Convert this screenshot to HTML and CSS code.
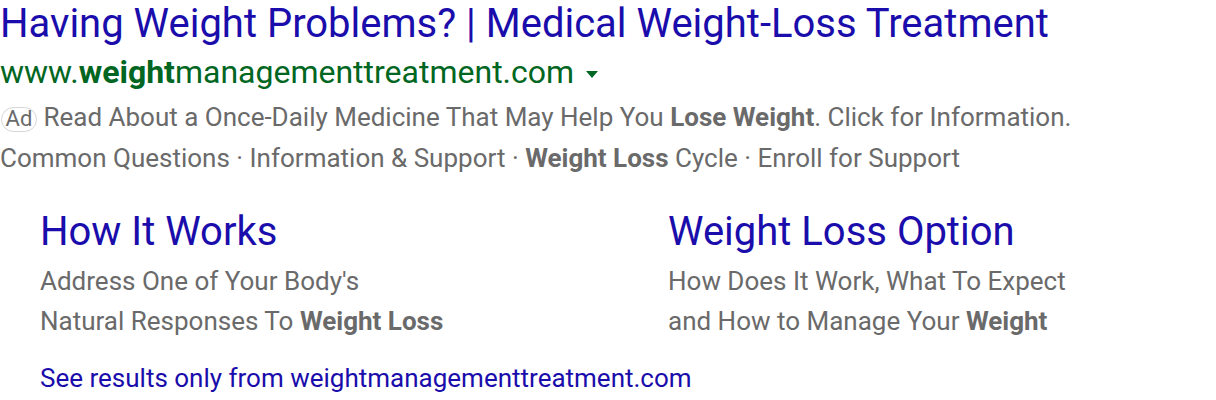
FILE: index.html
```html
<!DOCTYPE html>
<html>
<head>
<meta charset="utf-8">
<link rel="stylesheet" href="styles.css">
</head>
<body>
<div class="ad">
  <h3 class="title">Having Weight Problems? | Medical Weight-Loss Treatment</h3>
  <div class="url">www.<b>weight</b>managementtreatment.com <span class="caret"></span></div>
  <div class="desc"><span class="badge">Ad</span> Read About a Once-Daily Medicine That May Help You <b>Lose Weight</b>. Click for Information.</div>
  <div class="desc">Common Questions · Information &amp; Support · <b>Weight Loss</b> Cycle · Enroll for Support</div>
  <div class="sitelinks">
    <div class="sitelink">
      <div class="sl-title">How It Works</div>
      <div class="sl-desc">Address One of Your Body's</div>
      <div class="sl-desc">Natural Responses To <b>Weight Loss</b></div>
    </div>
    <div class="sitelink">
      <div class="sl-title">Weight Loss Option</div>
      <div class="sl-desc">How Does It Work, What To Expect</div>
      <div class="sl-desc">and How to Manage Your <b>Weight</b></div>
    </div>
  </div>
  <div class="more">See results only from weightmanagementtreatment.com</div>
</div>
</body>
</html>
```

FILE: styles.css
```css
html, body {
  margin: 0;
  padding: 0;
  background: #fff;
}
body {
  font-family: Roboto, "Liberation Sans", sans-serif;
}
.title {
  margin: 0;
  font-weight: 400;
  font-size: 40px;
  line-height: 47px;
  color: #1a0dab;
  white-space: nowrap;
}
.url {
  font-size: 32px;
  line-height: 50px;
  color: #006621;
  white-space: nowrap;
}
.url b {
  font-weight: 700;
}
.caret {
  display: inline-block;
  width: 0;
  height: 0;
  border-left: 6px solid transparent;
  border-right: 6px solid transparent;
  border-top: 7px solid #006621;
  vertical-align: 5px;
  margin-left: 4px;
}
.desc {
  font-size: 26px;
  line-height: 41px;
  color: #6a6a6a;
  white-space: nowrap;
}
.desc b, .sl-desc b {
  font-weight: 700;
}
.badge {
  display: inline-block;
  box-sizing: border-box;
  border: 1.5px solid #d6d6d6;
  border-radius: 13px;
  font-size: 22px;
  line-height: 22px;
  height: 25px;
  width: 36px;
  text-align: center;
  margin-left: 1px;
  margin-right: 0;
  color: #6a6a6a;
  vertical-align: 0;
}
.sitelinks {
  display: grid;
  grid-template-columns: 628px 1fr;
  padding-left: 40px;
  margin-top: 29px;
}
.sl-title {
  font-size: 40px;
  line-height: 47px;
  margin-bottom: 6px;
  color: #1a0dab;
  white-space: nowrap;
}
.sl-desc {
  font-size: 26px;
  line-height: 40px;
  color: #6a6a6a;
  white-space: nowrap;
}
.more {
  padding-left: 40px;
  margin-top: 17px;
  font-size: 26px;
  line-height: 40px;
  color: #1a0dab;
  white-space: nowrap;
}
```
